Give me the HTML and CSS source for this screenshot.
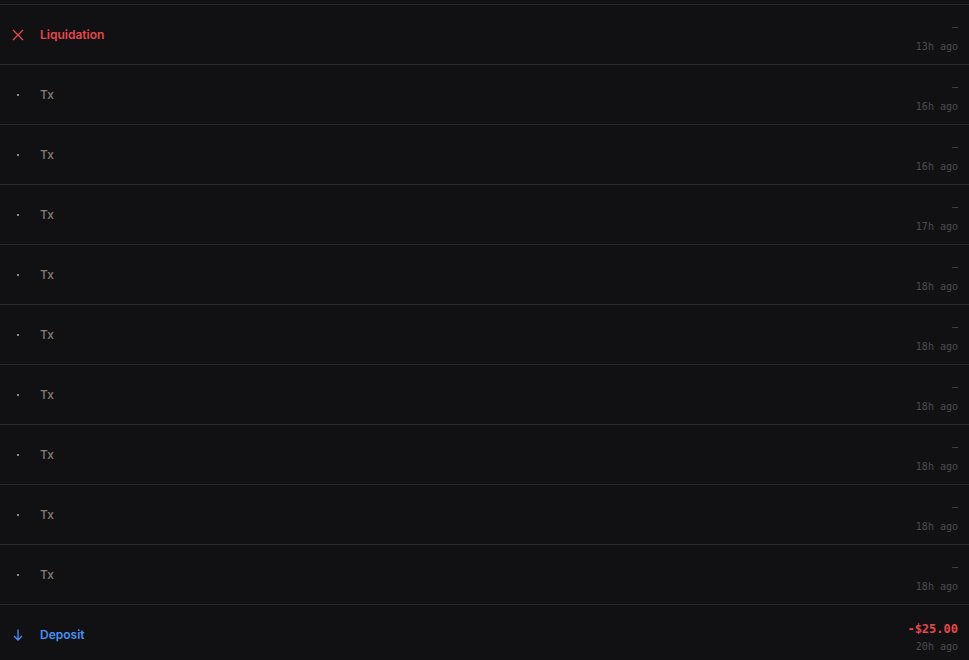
FILE: index.html
```html
<!DOCTYPE html>
<html>
<head>
<meta charset="utf-8">
<link rel="stylesheet" href="styles.css">
</head>
<body>
<div class="list">
  <div class="spacer"></div>
  <div class="row">
    <div class="left">
      <span class="icon red"><svg width="12" height="12" viewBox="0 0 12 12"><path d="M1 1L11 11M11 1L1 11" stroke="currentColor" stroke-width="1.3" fill="none"/></svg></span>
      <span class="label red">Liquidation</span>
    </div>
    <div class="right"><span class="amt dash">—</span><span class="time">13h ago</span></div>
  </div>
  <div class="row"><div class="left"><span class="icon"><span class="dot"></span></span><span class="label tx">Tx</span></div><div class="right"><span class="amt dash">—</span><span class="time">16h ago</span></div></div>
  <div class="row"><div class="left"><span class="icon"><span class="dot"></span></span><span class="label tx">Tx</span></div><div class="right"><span class="amt dash">—</span><span class="time">16h ago</span></div></div>
  <div class="row"><div class="left"><span class="icon"><span class="dot"></span></span><span class="label tx">Tx</span></div><div class="right"><span class="amt dash">—</span><span class="time">17h ago</span></div></div>
  <div class="row"><div class="left"><span class="icon"><span class="dot"></span></span><span class="label tx">Tx</span></div><div class="right"><span class="amt dash">—</span><span class="time">18h ago</span></div></div>
  <div class="row"><div class="left"><span class="icon"><span class="dot"></span></span><span class="label tx">Tx</span></div><div class="right"><span class="amt dash">—</span><span class="time">18h ago</span></div></div>
  <div class="row"><div class="left"><span class="icon"><span class="dot"></span></span><span class="label tx">Tx</span></div><div class="right"><span class="amt dash">—</span><span class="time">18h ago</span></div></div>
  <div class="row"><div class="left"><span class="icon"><span class="dot"></span></span><span class="label tx">Tx</span></div><div class="right"><span class="amt dash">—</span><span class="time">18h ago</span></div></div>
  <div class="row"><div class="left"><span class="icon"><span class="dot"></span></span><span class="label tx">Tx</span></div><div class="right"><span class="amt dash">—</span><span class="time">18h ago</span></div></div>
  <div class="row"><div class="left"><span class="icon"><span class="dot"></span></span><span class="label tx">Tx</span></div><div class="right"><span class="amt dash">—</span><span class="time">18h ago</span></div></div>
  <div class="row">
    <div class="left">
      <span class="icon blue"><svg width="12" height="12" viewBox="0 0 12 12"><path d="M6 0.5V11M2 7L6 11L10 7" stroke="currentColor" stroke-width="1.3" fill="none"/></svg></span>
      <span class="label blue">Deposit</span>
    </div>
    <div class="right"><span class="amt neg">-$25.00</span><span class="time">20h ago</span></div>
  </div>
</div>
</body>
</html>
```
FILE: styles.css
```css
html, body {
  margin: 0;
  padding: 0;
  background: #111113;
  overflow: hidden;
}
.list {
  display: flex;
  flex-direction: column;
}
.spacer {
  height: 4px;
}
.row {
  height: 59px;
  border-top: 1px solid #2a2a2e;
  display: flex;
  align-items: center;
  justify-content: space-between;
  padding: 0 11px 0 12px;
}
.left {
  display: flex;
  align-items: center;
  gap: 16px;
}
.icon {
  width: 12px;
  height: 12px;
  display: flex;
  align-items: center;
  justify-content: center;
}
.dot {
  width: 2px;
  height: 2px;
  background: #8a8a92;
  margin-left: -1px;
}
.label {
  font-family: Inter, "Liberation Sans", sans-serif;
  font-size: 12px;
  font-weight: 600;
}
.red { color: #e5484d; }
.blue { color: #4a90f0; }
.tx { color: #857d76; font-weight: 500; }
.right {
  display: flex;
  flex-direction: column;
  align-items: flex-end;
  font-family: "DejaVu Sans Mono", monospace;
  padding-top: 6px;
}
.amt {
  font-size: 12px;
  line-height: 14px;
  font-weight: bold;
  margin-bottom: 5px;
}
.dash {
  font-family: "Liberation Mono", monospace;
  color: #4a4a4f;
  font-size: 10px;
  line-height: 12px;
  font-weight: normal;
  margin-bottom: 7px;
}
.neg { color: #e5484d; }
.time {
  font-size: 10px;
  line-height: 12px;
  color: #4c4c51;
}
```
